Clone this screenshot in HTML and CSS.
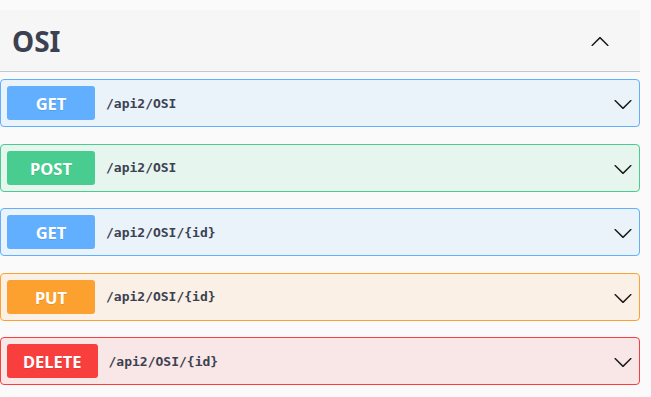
FILE: index.html
```html
<!DOCTYPE html>
<html lang="en">
<head>
<meta charset="utf-8"/>
<title>OSI</title>
<link rel="stylesheet" href="styles.css">
</head>
<body>
<div class="tag-section">
    <div class="tag-header">
        <h3>OSI</h3>
        <svg class="arrow" width="20" height="20" viewBox="0 0 20 20"><path d="M17.418 14.891c.272.268.709.268.979 0s.271-.701 0-.969l-7.908-7.83c-.27-.268-.707-.268-.979 0l-7.908 7.83c-.27.268-.27.701 0 .969.271.268.709.268.979 0L10 7.75l7.418 7.141z"/></svg>
    </div>

    <div class="opblock get">
        <span class="method">GET</span>
        <span class="path">/api2/OSI</span>
        <svg class="arrow" width="20" height="20" viewBox="0 0 20 20"><path d="M17.418 6.109c.272-.268.709-.268.979 0s.271.701 0 .969l-7.908 7.83c-.27.268-.707.268-.979 0l-7.908-7.83c-.27-.268-.27-.701 0-.969.271-.268.709-.268.979 0L10 13.25l7.418-7.141z"/></svg>
    </div>
    <div class="opblock post">
        <span class="method">POST</span>
        <span class="path">/api2/OSI</span>
        <svg class="arrow" width="20" height="20" viewBox="0 0 20 20"><path d="M17.418 6.109c.272-.268.709-.268.979 0s.271.701 0 .969l-7.908 7.83c-.27.268-.707.268-.979 0l-7.908-7.83c-.27-.268-.27-.701 0-.969.271-.268.709-.268.979 0L10 13.25l7.418-7.141z"/></svg>
    </div>
    <div class="opblock get">
        <span class="method">GET</span>
        <span class="path">/api2/OSI/{id}</span>
        <svg class="arrow" width="20" height="20" viewBox="0 0 20 20"><path d="M17.418 6.109c.272-.268.709-.268.979 0s.271.701 0 .969l-7.908 7.83c-.27.268-.707.268-.979 0l-7.908-7.83c-.27-.268-.27-.701 0-.969.271-.268.709-.268.979 0L10 13.25l7.418-7.141z"/></svg>
    </div>
    <div class="opblock put">
        <span class="method">PUT</span>
        <span class="path">/api2/OSI/{id}</span>
        <svg class="arrow" width="20" height="20" viewBox="0 0 20 20"><path d="M17.418 6.109c.272-.268.709-.268.979 0s.271.701 0 .969l-7.908 7.83c-.27.268-.707.268-.979 0l-7.908-7.83c-.27-.268-.27-.701 0-.969.271-.268.709-.268.979 0L10 13.25l7.418-7.141z"/></svg>
    </div>
    <div class="opblock delete">
        <span class="method">DELETE</span>
        <span class="path">/api2/OSI/{id}</span>
        <svg class="arrow" width="20" height="20" viewBox="0 0 20 20"><path d="M17.418 6.109c.272-.268.709-.268.979 0s.271.701 0 .969l-7.908 7.83c-.27.268-.707.268-.979 0l-7.908-7.83c-.27-.268-.27-.701 0-.969.271-.268.709-.268.979 0L10 13.25l7.418-7.141z"/></svg>
    </div>
</div>
</body>
</html>
```

FILE: styles.css
```css
body {
    margin: 0;
    background: #fafafa;
    font-family: "Noto Sans", sans-serif;
    color: #3b4151;
}
.tag-section {
    width: 640px;
    padding-top: 10px;
}
.tag-header {
    display: flex;
    align-items: center;
    height: 61px;
    padding: 0 30px 0 12px;
    background: #f6f6f6;
    border-bottom: 1px solid #c6c7ca;
    margin-bottom: 7px;
}
.tag-header h3 {
    flex: 1;
    margin: 0;
    font-size: 28px;
    font-weight: 700;
    line-height: 1;
    padding-top: 1px;
}
.arrow {
    fill: #1b1b1b;
}
.opblock {
    display: flex;
    align-items: center;
    box-sizing: border-box;
    height: 48px;
    padding: 0 6px;
    border: 1px solid;
    border-radius: 4px;
    margin-bottom: 16.5px;
}
.opblock .arrow {
    margin-left: auto;
    margin-top: 2px;
}
.method {
    box-sizing: border-box;
    min-width: 88px;
    height: 34px;
    padding: 0 16px;
    border-radius: 3px;
    color: #fff;
    font-size: 16.5px;
    font-weight: 700;
    text-align: center;
    line-height: 36px;
    text-shadow: 0 1px 0 rgba(0, 0, 0, .1);
}
.path {
    margin-left: 11px;
    font-family: "DejaVu Sans Mono", monospace;
    font-size: 13px;
    font-weight: 700;
}
.get { background: rgba(97, 175, 254, .1); border-color: #61affe; }
.get .method { background: #61affe; }
.post { background: rgba(73, 204, 144, .1); border-color: #49cc90; }
.post .method { background: #49cc90; }
.put { background: rgba(252, 161, 48, .1); border-color: #fca130; }
.put .method { background: #fca130; }
.delete { background: rgba(249, 62, 62, .1); border-color: #f93e3e; }
.delete .method { background: #f93e3e; }
```
